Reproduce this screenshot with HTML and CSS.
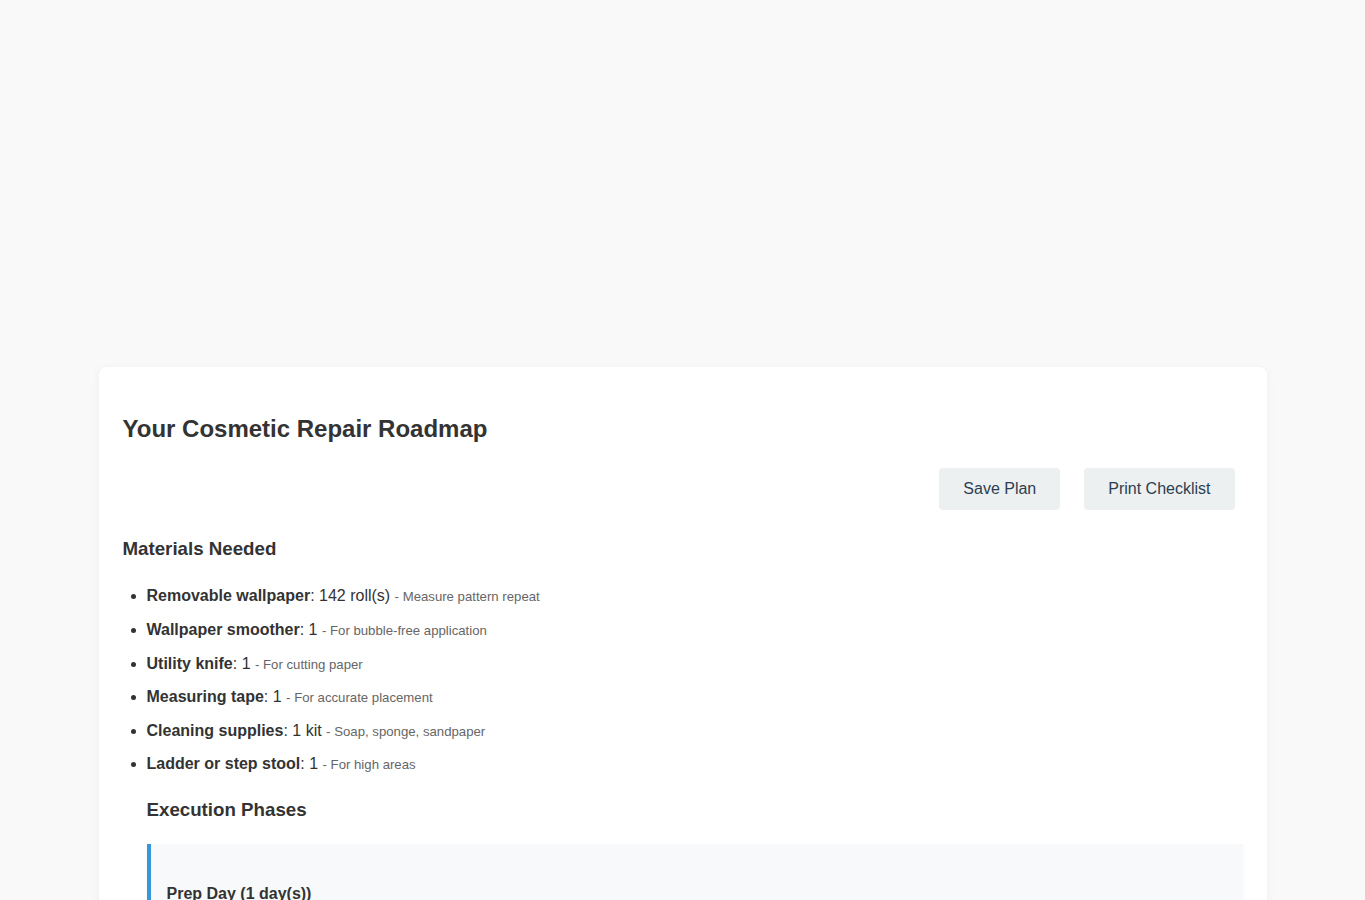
FILE: index.html
```html
<!DOCTYPE html>
<html lang="en">
<head>
<meta charset="utf-8">
<title>Your Cosmetic Repair Roadmap</title>
<link rel="stylesheet" href="styles.css">
</head>
<body>
<div class="container">
  <div class="spacer"></div>
  <section class="card">
    <h2 class="title">Your Cosmetic Repair Roadmap</h2>
    <div class="actions">
      <button class="btn">Save Plan</button>
      <button class="btn">Print Checklist</button>
    </div>
    <h3 class="section-title">Materials Needed</h3>
    <ul class="materials">
      <li><strong>Removable wallpaper</strong>: 142 roll(s) <small class="note">- Measure pattern repeat</small></li>
      <li><strong>Wallpaper smoother</strong>: 1 <small class="note">- For bubble-free application</small></li>
      <li><strong>Utility knife</strong>: 1 <small class="note">- For cutting paper</small></li>
      <li><strong>Measuring tape</strong>: 1 <small class="note">- For accurate placement</small></li>
      <li><strong>Cleaning supplies</strong>: 1 kit <small class="note">- Soap, sponge, sandpaper</small></li>
      <li><strong>Ladder or step stool</strong>: 1 <small class="note">- For high areas</small></li>
      <h3 class="section-title phases-title">Execution Phases</h3>
      <div class="phase">
        <h4 class="phase-title">Prep Day (1 day(s))</h4>
        <p class="phase-text">Clean walls, remove outlet covers, measure and mark placement lines.</p>
      </div>
    </ul>
  </section>
</div>
</body>
</html>
```

FILE: styles.css
```css
html, body {
  margin: 0;
  padding: 0;
}
body {
  background: #f9f9f9;
  font-family: "Liberation Sans", Arial, sans-serif;
  color: #333;
  line-height: 1.6;
}
.container {
  max-width: 1168px;
  margin: 0 auto;
}
.spacer {
  height: 367px;
}
.card {
  background: #fff;
  border-radius: 8px;
  box-shadow: 0 2px 10px rgba(0, 0, 0, 0.05);
  padding: 24px;
}
.title {
  font-size: 24px;
  line-height: 1.2;
  margin: 24px 0 0;
  color: #333;
}
.actions {
  display: flex;
  justify-content: flex-end;
  gap: 24px;
  margin: 24px 8px 0 0;
}
.btn {
  font-family: "Liberation Sans", Arial, sans-serif;
  font-size: 16px;
  line-height: 18px;
  padding: 12px 24px;
  background: #ecf0f1;
  color: #2c3e50;
  border: none;
  border-radius: 4px;
}
.section-title {
  font-size: 18.72px;
  margin: 24px 0 19.72px;
  color: #333;
}
.materials {
  margin: 0;
  padding-left: 24px;
}
.materials li {
  margin-bottom: 8px;
  line-height: 25.6px;
}
.phases-title {
  margin: 18px 0 18.72px;
}
.note {
  font-size: 13.2px;
  line-height: 1;
  color: #666;
}
.phase {
  background: #f8f9fa;
  border-left: 4px solid #3498db;
  padding: 16px;
  box-shadow: 0 2px 4px rgba(0, 0, 0, 0.04);
}
.phase-title {
  font-size: 16px;
  margin: 21px 0 8px;
}
.phase-text {
  margin: 0;
}
```
